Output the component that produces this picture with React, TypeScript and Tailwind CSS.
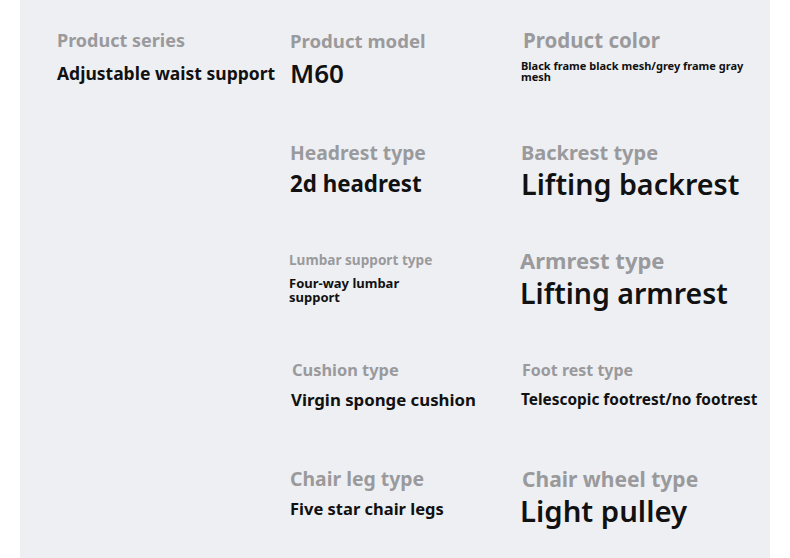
import React from 'react';

type CellProps = {
  label: string;
  value: string;
  labelClass: string;
  valueClass: string;
};

function Cell({ label, value, labelClass, valueClass }: CellProps) {
  return (
    <div className="flex flex-col items-start">
      <p className={`font-bold text-[#9a9a9c] whitespace-nowrap ${labelClass}`}>{label}</p>
      <p className={`font-bold text-[#111111] ${valueClass}`}>{value}</p>
    </div>
  );
}

export default function App() {
  return (
    <div className="w-[790px] h-[558px] bg-white font-['Noto_Sans','Liberation_Sans',sans-serif]">
      <div className="ml-[20px] w-[750px] h-[558px] bg-[#eeeff3] pt-[28px] pl-[37px]">
        {/* Row 1 */}
        <div className="grid grid-cols-[233px_231px_1fr] h-[113px]">
          <Cell
            label="Product series"
            value="Adjustable waist support"
            labelClass="text-[18px] leading-[24px]"
            valueClass="text-[17.5px] leading-[24px] mt-[9px] whitespace-nowrap"
          />
          <Cell
            label="Product model"
            value="M60"
            labelClass="text-[18.6px] leading-[24px] mt-[1px]"
            valueClass="text-[26px] font-semibold leading-[24px] mt-[8px]"
          />
          <Cell
            label="Product color"
            value="Black frame black mesh/grey frame gray mesh"
            labelClass="text-[20.5px] leading-[24px] ml-[2px]"
            valueClass="text-[11px] leading-[11px] mt-[8px] w-[225px]"
          />
        </div>

        {/* Row 2 */}
        <div className="grid grid-cols-[233px_231px_1fr] h-[107px]">
          <div />
          <Cell
            label="Headrest type"
            value="2d headrest"
            labelClass="text-[19.3px] leading-[24px]"
            valueClass="text-[22.3px] leading-[28px] mt-[5px]"
          />
          <Cell
            label="Backrest type"
            value="Lifting backrest"
            labelClass="text-[20px] leading-[24px]"
            valueClass="text-[28.7px] font-semibold leading-[30px] mt-[4px] whitespace-nowrap"
          />
        </div>

        {/* Row 3 */}
        <div className="grid grid-cols-[233px_231px_1fr] h-[110px]">
          <div />
          <Cell
            label="Lumbar support type"
            value="Four-way lumbar support"
            labelClass="text-[13.6px] leading-[24px] -ml-[1px]"
            valueClass="text-[13px] leading-[14px] mt-[4px] w-[125px] -ml-[1px]"
          />
          <Cell
            label="Armrest type"
            value="Lifting armrest"
            labelClass="text-[22px] leading-[24px] -ml-[1px]"
            valueClass="text-[28.5px] font-semibold leading-[30px] mt-[6px] -ml-[1px] whitespace-nowrap"
          />
        </div>

        {/* Row 4 */}
        <div className="grid grid-cols-[233px_231px_1fr] h-[109px]">
          <div />
          <Cell
            label="Cushion type"
            value="Virgin sponge cushion"
            labelClass="text-[16.4px] leading-[24px] ml-[2px]"
            valueClass="text-[16.8px] leading-[24px] mt-[6px] ml-[1px] whitespace-nowrap"
          />
          <Cell
            label="Foot rest type"
            value="Telescopic footrest/no footrest"
            labelClass="text-[16px] leading-[24px] ml-[1px]"
            valueClass="text-[15.4px] leading-[24px] mt-[6px] whitespace-nowrap"
          />
        </div>

        {/* Row 5 */}
        <div className="grid grid-cols-[233px_231px_1fr]">
          <div />
          <Cell
            label="Chair leg type"
            value="Five star chair legs"
            labelClass="text-[19.4px] leading-[24px]"
            valueClass="text-[16.5px] leading-[24px] mt-[6px] whitespace-nowrap"
          />
          <Cell
            label="Chair wheel type"
            value="Light pulley"
            labelClass="text-[21px] leading-[24px] ml-[1px]"
            valueClass="text-[29.3px] font-semibold leading-[30px] mt-[5px] -ml-[1px] whitespace-nowrap"
          />
        </div>
      </div>
    </div>
  );
}
